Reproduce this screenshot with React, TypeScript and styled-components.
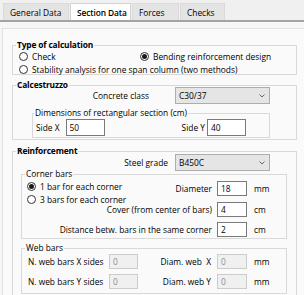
import styled, { createGlobalStyle } from "styled-components";

const GlobalStyle = createGlobalStyle`
  html, body {
    margin: 0;
    padding: 0;
    background: #f0f0f0;
  }
  body {
    font-family: "Open Sans", "Noto Sans", Arial, sans-serif;
    font-size: 8.4px;
    color: #000;
  }
  * {
    box-sizing: border-box;
  }
`;

const Window = styled.div`
  width: 304px;
  height: 295px;
  overflow: hidden;
  display: flex;
  flex-direction: column;
  background: #f0f0f0;
`;

const TabStrip = styled.div`
  height: 20px;
  flex-shrink: 0;
  display: flex;
  align-items: flex-end;
  gap: 1px;
  padding-left: 3px;
`;

const Tab = styled.div<{ $active?: boolean; $w: number }>`
  width: ${(p) => p.$w}px;
  height: 17px;
  padding-left: 6px;
  display: flex;
  align-items: center;
  white-space: nowrap;
  background: ${(p) => (p.$active ? "#ffffff" : "#e4e4e4")};
  border: 1px solid ${(p) => (p.$active ? "#d2d2d2" : "#dadada")};
  border-bottom: none;
  font-weight: ${(p) => (p.$active ? 600 : 400)};
  letter-spacing: ${(p) => (p.$active ? "-0.1px" : "0")};
`;

const TabPage = styled.div`
  flex: 1;
  min-height: 0;
  display: flex;
  border-top: 2px solid #a4a4a4;
  background: #f6f6f6;
  padding: 6px 0 0 2px;
`;

const Panel = styled.div`
  flex: 1;
  display: flex;
  flex-direction: column;
  border-top: 1px solid #e2e2e2;
  border-left: 1px solid #e2e2e2;
  background: #fafafa;
  padding: 16px 0 0 9px;
`;

const Group = styled.div<{ $m?: string }>`
  position: relative;
  border: 1px solid #d9d9d9;
  margin: ${(p) => p.$m ?? "0"};
`;

const OuterGroup = styled(Group)`
  width: 285px;
  flex-shrink: 0;
`;

const Caption = styled.span<{ $bold?: boolean; $left?: number }>`
  position: absolute;
  top: -7px;
  left: ${(p) => p.$left ?? 3}px;
  padding: 0 1px;
  line-height: 11px;
  background: #fafafa;
  white-space: nowrap;
  font-weight: ${(p) => (p.$bold ? 700 : 400)};
  letter-spacing: ${(p) => (p.$bold ? "-0.15px" : "0")};
`;

const RadioLabel = styled.label<{ $wide?: boolean; $row?: number; $col?: number }>`
  display: inline-flex;
  align-items: center;
  gap: 4px;
  height: 10px;
  white-space: nowrap;
  grid-column: ${(p) => (p.$wide ? "1 / -1" : p.$col ?? "auto")};
  grid-row: ${(p) => p.$row ?? "auto"};
  justify-self: start;
  align-self: ${(p) => (p.$row === 1 ? "start" : "center")};
`;

const RadioDot = styled.span<{ $checked?: boolean }>`
  width: 9px;
  height: 9px;
  flex-shrink: 0;
  border-radius: 50%;
  border: 1px solid #333;
  background: #fff;
  display: flex;
  align-items: center;
  justify-content: center;

  &::after {
    content: "";
    width: 5px;
    height: 5px;
    border-radius: 50%;
    background: ${(p) => (p.$checked ? "#1a1a1a" : "transparent")};
  }
`;

const TypeBody = styled.div`
  display: grid;
  grid-template-columns: 121px auto;
  grid-auto-rows: 10px;
  row-gap: 3px;
  padding: 5px 0 0 6px;
`;

const ComboRow = styled.div<{ $pt: number }>`
  display: flex;
  justify-content: flex-end;
  align-items: center;
  padding: ${(p) => p.$pt}px 26px 0 0;
`;

const RowLabel = styled.span<{ $gap: number }>`
  margin-right: ${(p) => p.$gap}px;
  white-space: nowrap;
`;

const Combo = styled.div`
  width: 95px;
  height: 17px;
  display: flex;
  align-items: center;
  justify-content: space-between;
  padding: 0 4px 0 3px;
  background: #e5e5e5;
  border: 1px solid #adadad;
`;

const Chevron = () => (
  <svg width="6" height="4" viewBox="0 0 6 4">
    <polyline points="0.5,0.5 3,3 5.5,0.5" fill="none" stroke="#6a6a6a" strokeWidth="1" />
  </svg>
);

const DimRow = styled.div`
  display: flex;
  justify-content: space-between;
  align-items: center;
  padding: 5px 23px 1px 3px;
`;

const SideField = styled.div<{ $gap: number }>`
  display: flex;
  align-items: center;
  gap: ${(p) => p.$gap}px;
`;

const Field = styled.input<{ $w: number; $h?: number; $row?: number; $col?: number }>`
  width: ${(p) => p.$w}px;
  height: ${(p) => p.$h ?? 15}px;
  margin: 0;
  padding: 0 0 0 3px;
  font: inherit;
  color: #000;
  background: #fff;
  border: 1px solid #7a7a7a;
  border-radius: 0;
  outline: none;
  grid-row: ${(p) => p.$row ?? "auto"};
  grid-column: ${(p) => p.$col ?? "auto"};

  &:disabled {
    color: #8e8e8e;
    background: #f0f0f0;
    border-color: #cccccc;
  }
`;

const CornerGrid = styled.div`
  display: grid;
  grid-template-columns: 1fr 30px 39px;
  grid-template-rows: 15px 6px 15px 5px 15px;
  padding: 6px 0 1px 5px;
`;

const WebGrid = styled.div`
  display: grid;
  grid-template-columns: 81px 29px 1fr 30px 39px;
  grid-template-rows: 15px 15px;
  row-gap: 5px;
  padding: 5px 0 4px 6px;
`;

const CellLabel = styled.span<{ $row: number; $col?: number; $end?: boolean; $gap?: number }>`
  grid-row: ${(p) => p.$row};
  grid-column: ${(p) => p.$col ?? 1};
  justify-self: ${(p) => (p.$end ? "end" : "start")};
  align-self: center;
  margin-right: ${(p) => p.$gap ?? 0}px;
  white-space: pre;
`;

const Unit = styled.span<{ $row: number; $col: number }>`
  grid-row: ${(p) => p.$row};
  grid-column: ${(p) => p.$col};
  align-self: center;
  padding-left: 7px;
`;

const Radio = ({
  label,
  checked,
  wide,
  row,
  col,
}: {
  label: string;
  checked?: boolean;
  wide?: boolean;
  row?: number;
  col?: number;
}) => (
  <RadioLabel $wide={wide} $row={row} $col={col}>
    <RadioDot $checked={checked} />
    {label}
  </RadioLabel>
);

const App = () => {
  return (
    <>
      <GlobalStyle />
      <Window>
        <TabStrip>
          <Tab $w={66}>General Data</Tab>
          <Tab $w={61} $active>
            Section Data
          </Tab>
          <Tab $w={47}>Forces</Tab>
          <Tab $w={45}>Checks</Tab>
        </TabStrip>
        <TabPage>
          <Panel>
            <OuterGroup>
              <Caption $bold>Type of calculation</Caption>
              <TypeBody>
                <Radio label="Check" />
                <Radio label="Bending reinforcement design" checked />
                <Radio label="Stability analysis for one span column (two methods)" wide />
              </TypeBody>
            </OuterGroup>

            <OuterGroup $m="10px 0 0 0">
              <Caption $bold>Calcestruzzo</Caption>
              <ComboRow $pt={1}>
                <RowLabel $gap={26}>Concrete class</RowLabel>
                <Combo>
                  C30/37
                  <Chevron />
                </Combo>
              </ComboRow>
              <Group $m="9px 26px 1px 19px">
                <Caption $left={1}>Dimensions of rectangular section (cm)</Caption>
                <DimRow>
                  <SideField $gap={6}>
                    Side X
                    <Field $w={39} $h={17} defaultValue="50" readOnly />
                  </SideField>
                  <SideField $gap={2}>
                    Side Y
                    <Field $w={39} $h={17} defaultValue="40" readOnly />
                  </SideField>
                </DimRow>
              </Group>
            </OuterGroup>

            <OuterGroup $m="11px 0 0 0">
              <Caption $bold>Reinforcement</Caption>
              <ComboRow $pt={2}>
                <RowLabel $gap={7}>Steel grade</RowLabel>
                <Combo>
                  B450C
                  <Chevron />
                </Combo>
              </ComboRow>
              <Group $m="3px 9px 0 8px">
                <Caption>Corner bars</Caption>
                <CornerGrid>
                  <Radio label="1 bar for each corner" checked row={1} col={1} />
                  <CellLabel $row={1} $end $gap={5}>
                    Diameter
                  </CellLabel>
                  <Field $w={30} $row={1} $col={2} defaultValue="18" readOnly />
                  <Unit $row={1} $col={3}>mm</Unit>

                  <Radio label="3 bars for each corner" row={2} col={1} />

                  <CellLabel $row={3} $end $gap={5}>
                    Cover (from center of bars)
                  </CellLabel>
                  <Field $w={30} $row={3} $col={2} defaultValue="4" readOnly />
                  <Unit $row={3} $col={3}>cm</Unit>

                  <CellLabel $row={5} $end $gap={5}>
                    Distance betw. bars in the same corner
                  </CellLabel>
                  <Field $w={30} $row={5} $col={2} defaultValue="2" readOnly />
                  <Unit $row={5} $col={3}>cm</Unit>
                </CornerGrid>
              </Group>
              <Group $m="9px 9px 20px 8px">
                <Caption>Web bars</Caption>
                <WebGrid>
                  <CellLabel $row={1}>N. web bars X sides</CellLabel>
                  <Field $w={29} $row={1} $col={2} defaultValue="0" disabled />
                  <CellLabel $row={1} $col={3} $end $gap={6}>
                    {"Diam. web  X"}
                  </CellLabel>
                  <Field $w={30} $row={1} $col={4} defaultValue="0" disabled />
                  <Unit $row={1} $col={5}>mm</Unit>

                  <CellLabel $row={2}>N. web bars Y sides</CellLabel>
                  <Field $w={29} $row={2} $col={2} defaultValue="0" disabled />
                  <CellLabel $row={2} $col={3} $end $gap={6}>
                    Diam. web Y
                  </CellLabel>
                  <Field $w={30} $row={2} $col={4} defaultValue="0" disabled />
                  <Unit $row={2} $col={5}>mm</Unit>
                </WebGrid>
              </Group>
            </OuterGroup>
          </Panel>
        </TabPage>
      </Window>
    </>
  );
};

export default App;
